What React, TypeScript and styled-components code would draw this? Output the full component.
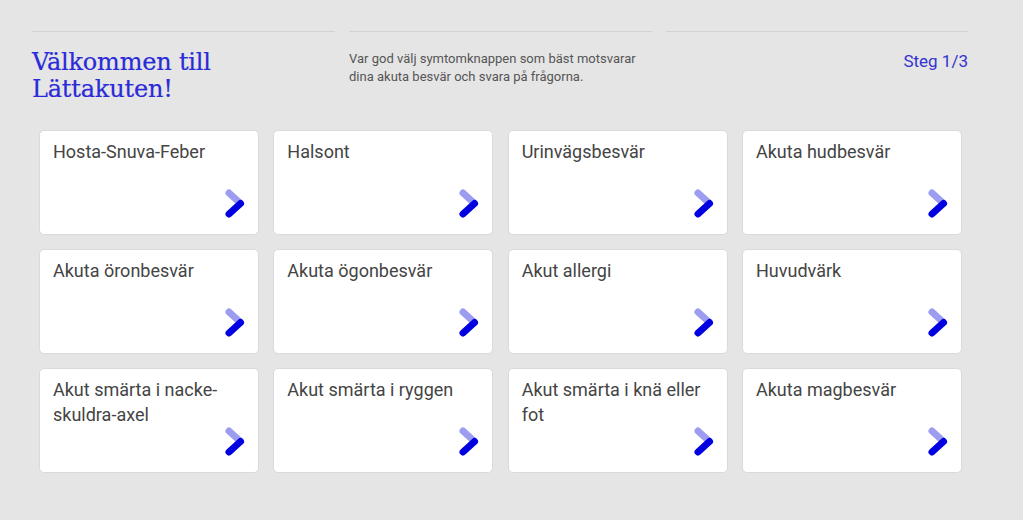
import styled, { createGlobalStyle } from 'styled-components';

const GlobalStyle = createGlobalStyle`
	html, body {
		margin: 0;
		padding: 0;
		background: #e5e5e5;
		font-family: Roboto, "Liberation Sans", sans-serif;
	}
`

const Page = styled.div`
	width: 936px;
	margin-left: 32px;
	padding-top: 31px;
`
const Header = styled.header`
	display: grid;
	grid-template-columns: 303px 303px 302px;
	column-gap: 14px;
`
const HeaderCell = styled.div<{ align?: string }>`
	border-top: 1px solid #d2d2d2;
	padding-top: 17px;
	text-align: ${({ align }) => align || 'left'};
`
const Title = styled.h1`
	margin: 0;
	font-family: "DejaVu Serif", "Liberation Serif", serif;
	font-weight: normal;
	font-size: 24px;
	line-height: 27px;
	letter-spacing: -0.2px;
	color: #2a2ad8;
	-webkit-text-stroke: 0.2px #2a2ad8;
`
const Intro = styled.p`
	margin: 0;
	padding-top: 1px;
	font-size: 13px;
	line-height: 18px;
	color: #555555;
`
const Step = styled.span`
	display: inline-block;
	padding-top: 2px;
	font-size: 17px;
	color: #3333d0;
`
const Grid = styled.div`
	display: grid;
	grid-template-columns: repeat(4, 220px);
	grid-auto-rows: 105px;
	column-gap: 14.33px;
	row-gap: 14px;
	margin: 27px 0 0 7px;
`
const Card = styled.button`
	position: relative;
	display: block;
	box-sizing: border-box;
	text-align: left;
	background: #ffffff;
	border: 1px solid #dadada;
	border-radius: 5px;
	padding: 0;
	font-family: Roboto, "Liberation Sans", sans-serif;
	font-size: 18px;
	line-height: 25px;
	color: #444444;
	cursor: pointer;
`
const Label = styled.span`
	position: absolute;
	top: 8px;
	left: 13px;
	right: 14px;
`
const Arrow = styled.svg`
	position: absolute;
	right: 12px;
	bottom: 15px;
`

const symptoms = [
	'Hosta-Snuva-Feber',
	'Halsont',
	'Urinvägsbesvär',
	'Akuta hudbesvär',
	'Akuta öronbesvär',
	'Akuta ögonbesvär',
	'Akut allergi',
	'Huvudvärk',
	'Akut smärta i nacke-skuldra-axel',
	'Akut smärta i ryggen',
	'Akut smärta i knä eller fot',
	'Akuta magbesvär',
]

const Chevron = () => (
	<Arrow width="26" height="32" viewBox="0 0 26 32">
		<line x1="9" y1="6" x2="20.5" y2="16.5" stroke="#9c9cf0" strokeWidth="7" strokeLinecap="round" />
		<line x1="20.5" y1="16.5" x2="9" y2="27" stroke="#0000e0" strokeWidth="7" strokeLinecap="round" />
	</Arrow>
)

const App = () => {
	return (
		<>
			<GlobalStyle />
			<Page>
				<Header>
					<HeaderCell>
						<Title>Välkommen till<br />Lättakuten!</Title>
					</HeaderCell>
					<HeaderCell>
						<Intro>Var god välj symtomknappen som bäst motsvarar dina akuta besvär och svara på frågorna.</Intro>
					</HeaderCell>
					<HeaderCell align="right">
						<Step>Steg 1/3</Step>
					</HeaderCell>
				</Header>
				<Grid>
					{symptoms.map((s) => (
						<Card key={s}>
							<Label>{s}</Label>
							<Chevron />
						</Card>
					))}
				</Grid>
			</Page>
		</>
	);
}

export default App;
